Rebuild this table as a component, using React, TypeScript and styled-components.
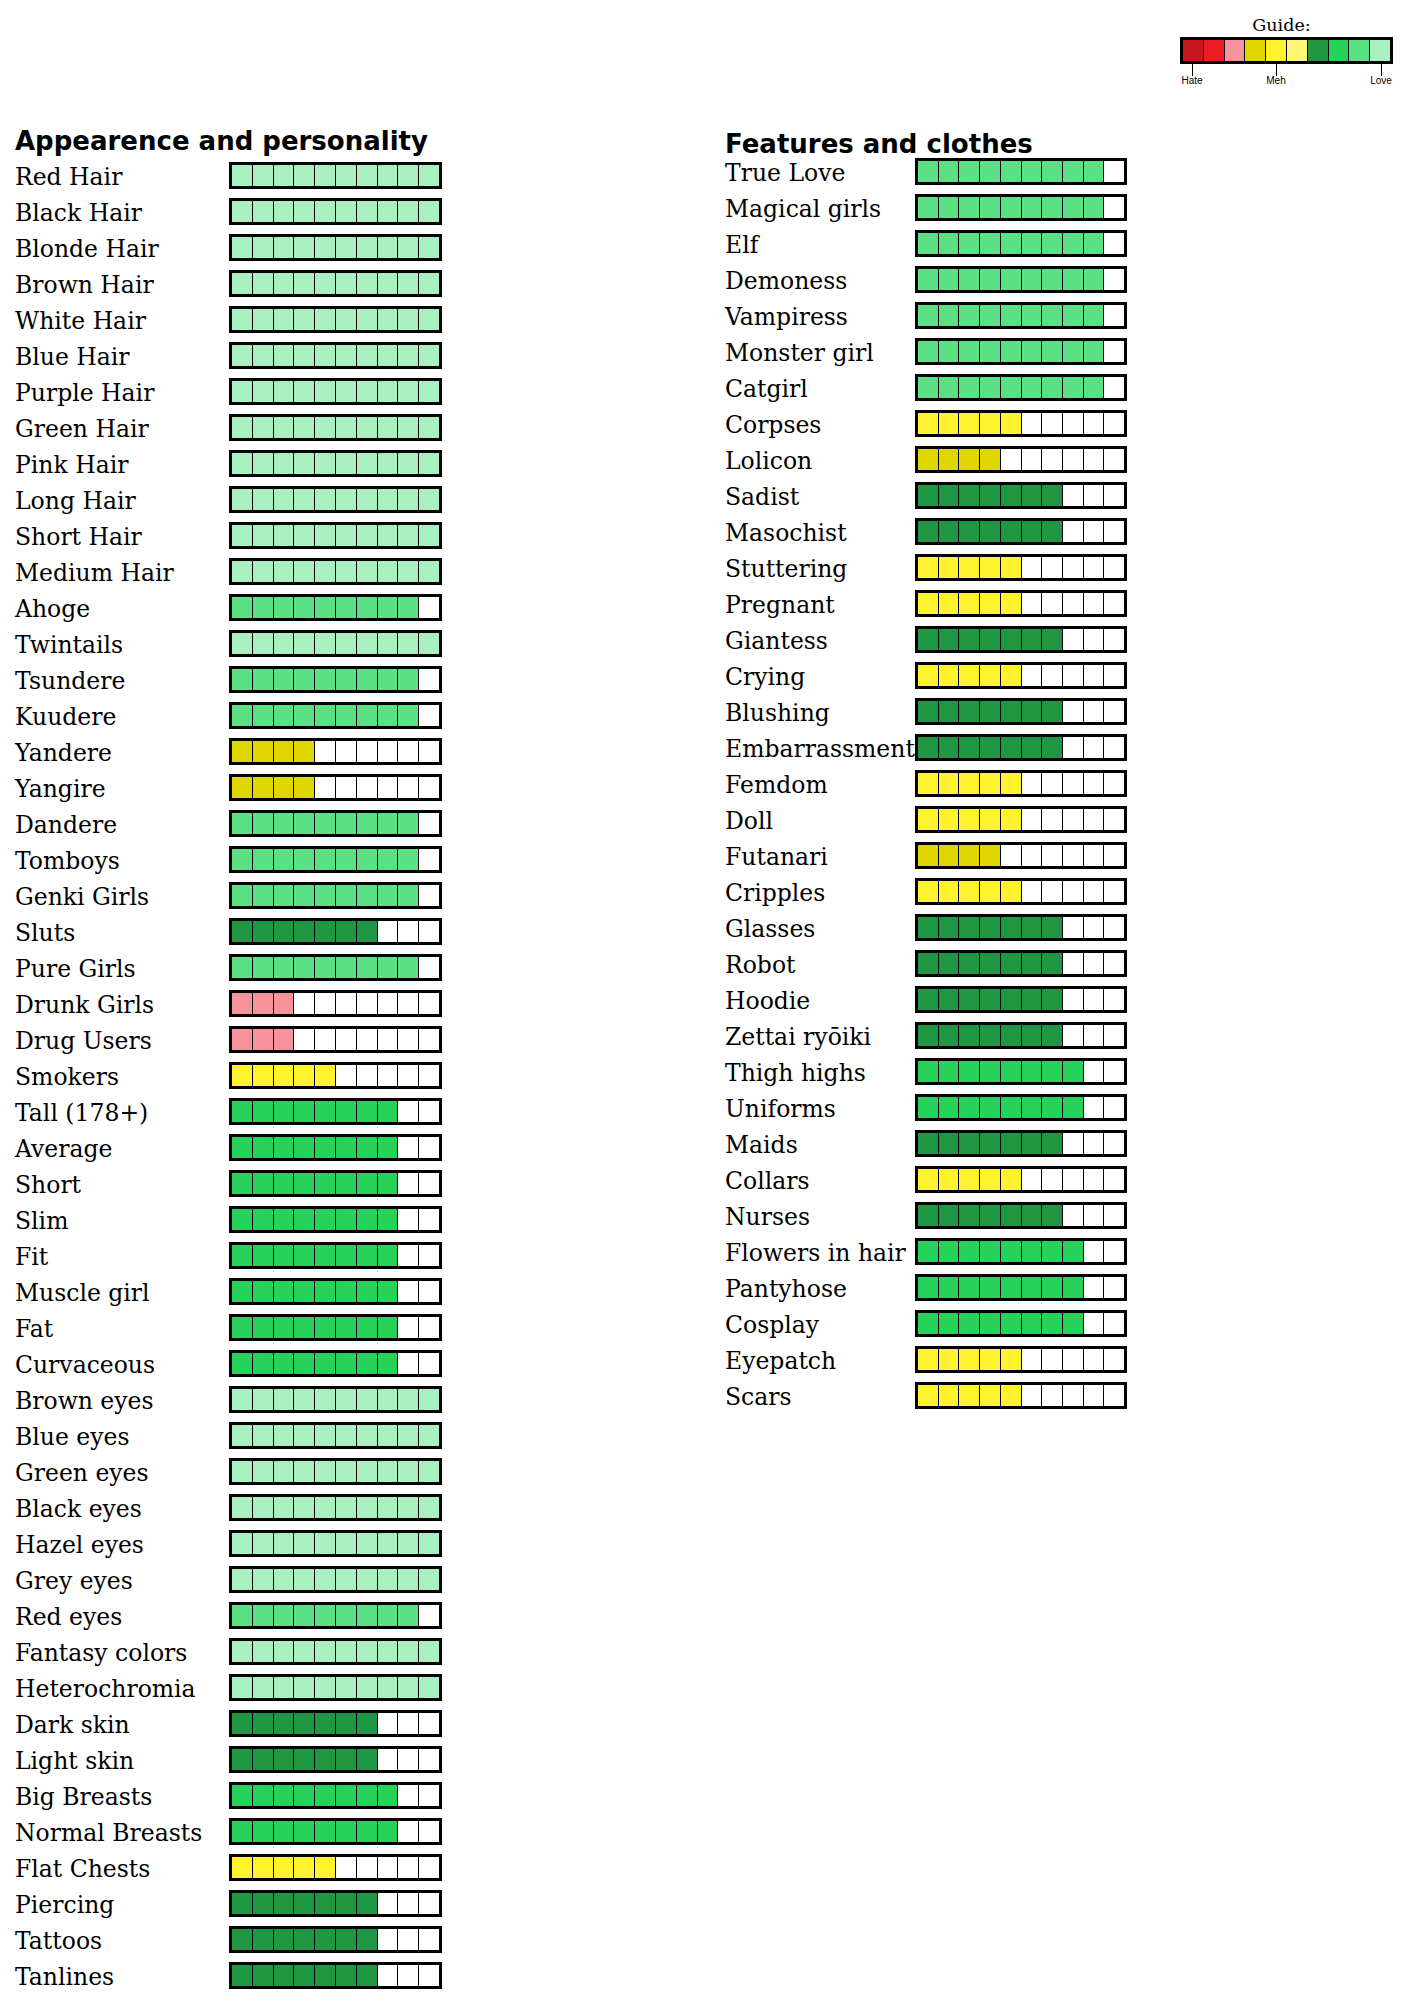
import styled, { createGlobalStyle } from "styled-components";

const LEVEL_COLORS = [
  "#ffffff",
  "#c8161e",
  "#ed1c24",
  "#f6939b",
  "#e0d600",
  "#fff22e",
  "#fff679",
  "#1e9642",
  "#28d25a",
  "#5ce084",
  "#a8f0c0",
];

const appearance: [string, number][] = [
  ["Red Hair", 10],
  ["Black Hair", 10],
  ["Blonde Hair", 10],
  ["Brown Hair", 10],
  ["White Hair", 10],
  ["Blue Hair", 10],
  ["Purple Hair", 10],
  ["Green Hair", 10],
  ["Pink Hair", 10],
  ["Long Hair", 10],
  ["Short Hair", 10],
  ["Medium Hair", 10],
  ["Ahoge", 9],
  ["Twintails", 10],
  ["Tsundere", 9],
  ["Kuudere", 9],
  ["Yandere", 4],
  ["Yangire", 4],
  ["Dandere", 9],
  ["Tomboys", 9],
  ["Genki Girls", 9],
  ["Sluts", 7],
  ["Pure Girls", 9],
  ["Drunk Girls", 3],
  ["Drug Users", 3],
  ["Smokers", 5],
  ["Tall (178+)", 8],
  ["Average", 8],
  ["Short", 8],
  ["Slim", 8],
  ["Fit", 8],
  ["Muscle girl", 8],
  ["Fat", 8],
  ["Curvaceous", 8],
  ["Brown eyes", 10],
  ["Blue eyes", 10],
  ["Green eyes", 10],
  ["Black eyes", 10],
  ["Hazel eyes", 10],
  ["Grey eyes", 10],
  ["Red eyes", 9],
  ["Fantasy colors", 10],
  ["Heterochromia", 10],
  ["Dark skin", 7],
  ["Light skin", 7],
  ["Big Breasts", 8],
  ["Normal Breasts", 8],
  ["Flat Chests", 5],
  ["Piercing", 7],
  ["Tattoos", 7],
  ["Tanlines", 7],
];

const features: [string, number][] = [
  ["True Love", 9],
  ["Magical girls", 9],
  ["Elf", 9],
  ["Demoness", 9],
  ["Vampiress", 9],
  ["Monster girl", 9],
  ["Catgirl", 9],
  ["Corpses", 5],
  ["Lolicon", 4],
  ["Sadist", 7],
  ["Masochist", 7],
  ["Stuttering", 5],
  ["Pregnant", 5],
  ["Giantess", 7],
  ["Crying", 5],
  ["Blushing", 7],
  ["Embarrassment", 7],
  ["Femdom", 5],
  ["Doll", 5],
  ["Futanari", 4],
  ["Cripples", 5],
  ["Glasses", 7],
  ["Robot", 7],
  ["Hoodie", 7],
  ["Zettai ryōiki", 7],
  ["Thigh highs", 8],
  ["Uniforms", 8],
  ["Maids", 7],
  ["Collars", 5],
  ["Nurses", 7],
  ["Flowers in hair", 8],
  ["Pantyhose", 8],
  ["Cosplay", 8],
  ["Eyepatch", 5],
  ["Scars", 5],
];

const GlobalStyle = createGlobalStyle`
  * { box-sizing: border-box; }
  body {
    margin: 0;
    background: #ffffff;
    color: #000000;
  }
`;

function RatingBar({ level, width }: { level: number; width: number }) {
  return (
    <Bar $width={width}>
      {Array.from({ length: 10 }, (_, i) => (
        <Cell key={i} $fill={i < level ? LEVEL_COLORS[level] : "#ffffff"} />
      ))}
    </Bar>
  );
}

export default function App() {
  return (
    <>
      <GlobalStyle />
      <Page>
        <GuideArea>
          <Guide>
            <GuideTitle>Guide:</GuideTitle>
            <Bar $width={213}>
              {LEVEL_COLORS.slice(1).map((c) => (
                <Cell key={c} $fill={c} />
              ))}
            </Bar>
            <Scale>
              <Mark $left={0}>
                <Tick />
                <MarkLabel>Hate</MarkLabel>
              </Mark>
              <Mark $left={60}>
                <Tick />
                <MarkLabel>Meh</MarkLabel>
              </Mark>
              <Mark $left={81}>
                <Tick />
                <MarkLabel>Love</MarkLabel>
              </Mark>
            </Scale>
          </Guide>
        </GuideArea>

        <Columns>
          <Column $width={710}>
            <Heading $pad={0} $height={31}>
              Appearence and personality
            </Heading>
            {appearance.map(([name, level]) => (
              <Row key={name}>
                <Label $width={214}>{name}</Label>
                <RatingBar level={level} width={213} />
              </Row>
            ))}
          </Column>

          <Column $width={420}>
            <Heading $pad={3} $height={27}>
              Features and clothes
            </Heading>
            {features.map(([name, level]) => (
              <Row key={name}>
                <Label $width={190}>{name}</Label>
                <RatingBar level={level} width={212} />
              </Row>
            ))}
          </Column>
        </Columns>
      </Page>
    </>
  );
}

const Page = styled.div`
  width: 1416px;
  display: flex;
  flex-direction: column;
`;

const GuideArea = styled.div`
  display: flex;
  justify-content: flex-end;
  padding: 15px 23px 0 0;
`;

const Guide = styled.div`
  display: flex;
  flex-direction: column;
  width: 213px;
`;

const GuideTitle = styled.div`
  font-family: "DejaVu Serif", "Liberation Serif", serif;
  font-size: 17.5px;
  line-height: 20px;
  text-align: center;
  margin: 0 0 2px -10px;
`;

const Scale = styled.div`
  display: flex;
`;

const Mark = styled.div<{ $left: number }>`
  width: 24px;
  margin-left: ${(p) => p.$left}px;
  display: flex;
  flex-direction: column;
  align-items: center;
`;

const Tick = styled.div`
  width: 1px;
  height: 12px;
  background: #000000;
`;

const MarkLabel = styled.span`
  font-family: "Liberation Sans", Arial, sans-serif;
  font-size: 10px;
  line-height: 10px;
  white-space: nowrap;
`;

const Columns = styled.div`
  display: flex;
  padding-left: 15px;
  margin-top: 40px;
`;

const Column = styled.div<{ $width: number }>`
  width: ${(p) => p.$width}px;
  display: flex;
  flex-direction: column;
`;

const Heading = styled.h2<{ $pad: number; $height: number }>`
  margin: 0;
  padding-top: ${(p) => p.$pad}px;
  height: ${(p) => p.$height}px;
  font-family: "DejaVu Sans", Verdana, sans-serif;
  font-weight: 700;
  font-size: 26px;
  line-height: 30px;
  white-space: nowrap;
`;

const Row = styled.div`
  display: flex;
  align-items: flex-start;
  height: 36px;
`;

const Label = styled.span<{ $width: number }>`
  position: relative;
  z-index: 1;
  width: ${(p) => p.$width}px;
  flex-shrink: 0;
  font-family: "DejaVu Serif", "Liberation Serif", serif;
  font-size: 23.5px;
  line-height: 41px;
  white-space: nowrap;
`;

const Bar = styled.div<{ $width: number }>`
  display: flex;
  width: ${(p) => p.$width}px;
  height: 27px;
  margin-top: 5px;
  flex-shrink: 0;
  border: 3px solid #000000;
  background: #ffffff;

  ${Guide} > & {
    margin-top: 0;
  }
`;

const Cell = styled.div<{ $fill: string }>`
  flex: 1;
  background: ${(p) => p.$fill};

  & + & {
    border-left: 1px solid #000000;
  }
`;
